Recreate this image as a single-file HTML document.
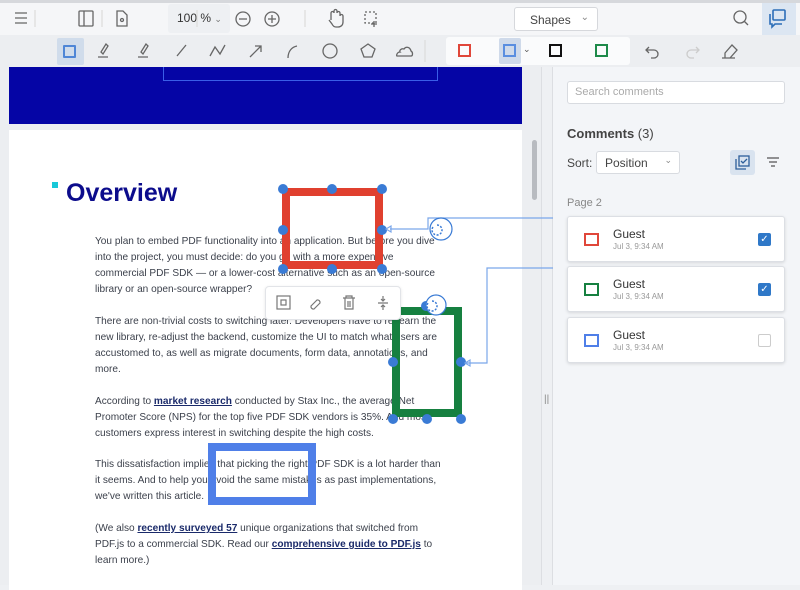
<!DOCTYPE html>
<html><head><meta charset="utf-8"><style>
*{box-sizing:border-box;margin:0;padding:0}
body{width:800px;height:585px;overflow:hidden;font-family:"Liberation Sans",sans-serif;background:#eef0f3;position:relative;color:#333}
.a{position:absolute}
.tb{left:0;width:800px;background:#f5f6f8}
svg{position:absolute;overflow:visible}
.p{font-size:10.1px;color:#3a3f4a;line-height:16px;left:95px;width:350px;white-space:nowrap}
.p b{color:#1a2a6a;text-decoration:underline;font-weight:bold}
.card{left:567px;width:218px;height:46px;background:#fff;border:1px solid #dcdfe4;border-radius:3px;box-shadow:0 1px 3px rgba(0,0,0,.12)}
.card .sq{position:absolute;left:16px;top:16px;width:15px;height:13px;border:2px solid}
.card .n{position:absolute;left:45px;top:10px;font-size:12px;color:#333}
.card .d{position:absolute;left:45px;top:25px;font-size:8px;color:#999}
.card .cb{position:absolute;left:190px;top:16px;width:13px;height:13px;border-radius:2px}
.h{width:10px;height:10px;border-radius:50%;background:#3a7bd5;position:absolute}
</style></head><body>
<div class="a" style="left:0;top:0;width:800px;height:3px;background:#d6d8dc"></div>
<div class="a tb" style="top:3px;height:32px"></div>
<div class="a tb" style="top:35px;height:32px;background:#eceef1"></div>
<div class="a" style="left:168px;top:4px;width:62px;height:29px;background:#eef0f3;border-radius:3px"></div>
<div class="a" style="left:177px;top:11px;font-size:12px;color:#333">100 % <span style="font-size:9px;color:#777">⌄</span></div>
<svg style="left:0;top:0" width="800" height="70" fill="none" stroke="#666" stroke-width="1.3">
<path d="M15 13h12M15 18h12M15 23h12"/>
<line x1="35" y1="10" x2="35" y2="27" stroke="#ddd"/>
<rect x="79" y="11" width="14" height="15" rx="1"/><line x1="84" y1="11" x2="84" y2="26"/>
<path d="M117 11h6l4 4v11h-10z"/><circle cx="122" cy="20" r="1.5"/>
<line x1="102" y1="10" x2="102" y2="27" stroke="#ddd"/>
<line x1="197" y1="10" x2="197" y2="27" stroke="#ddd"/>
<circle cx="243" cy="19" r="7"/><path d="M239 19h8"/>
<circle cx="272" cy="19" r="7"/><path d="M268 19h8M272 15v8"/>
<line x1="305" y1="10" x2="305" y2="27" stroke="#ddd"/>
<path d="M331 20v-7a1.5 1.5 0 013 0v-2a1.5 1.5 0 013 0v2a1.5 1.5 0 013 0v3a1.5 1.5 0 013 0v6c0 3-2 5-5 5h-2c-2 0-3-1-4-3l-3-4"/>
<rect x="365" y="12" width="11" height="11" stroke-dasharray="2 2"/><path d="M374 21v6M371 24h6"/>
<circle cx="740" cy="17" r="6"/><path d="M744 21l4 4"/>
<path d="M106 44l-5 8 2 2 5-8zM98 57h10" />
<path d="M146 44l-5 8 2 2 5-8zM138 57h10"/>
<path d="M177 56l9-11"/>
<path d="M210 56l5-9 5 7 5-9"/>
<path d="M250 57l11-11M255 46h6v6"/>
<path d="M288 58c0-7 4-11 9-12"/>
<circle cx="330" cy="51" r="7"/>
<path d="M368 44l7 5-3 8h-8l-3-8z"/>
<path d="M397 56h14c2 0 2-4 0-5-1-4-5-5-7-2-3-1-5 2-4 3-3 0-4 4-3 4z"/>
<line x1="425" y1="40" x2="425" y2="62" stroke="#ddd"/>
<path d="M649 47l-3 3 3 3M646 50h8a4 4 0 010 8h-3"/>
<path d="M696 47l3 3-3 3M699 50h-8a4 4 0 000 8h3" stroke="#ccc"/>
<path d="M725 53l7-8 5 5-7 8h-5zM722 58h13"/>
</svg>
<div class="a" style="left:514px;top:7px;width:84px;height:24px;background:#fff;border:1px solid #d6d8dc;border-radius:3px;font-size:12px;color:#444;padding:5px 0 0 15px">Shapes <span style="position:absolute;right:8px;top:4px;font-size:10px;color:#888">⌄</span></div>
<div class="a" style="left:762px;top:3px;width:34px;height:32px;background:#dce6f2"></div>
<svg style="left:766px;top:7px" width="26" height="24" fill="none" stroke="#2d6fb8" stroke-width="1.6"><rect x="7" y="3" width="12" height="10" rx="1"/><path d="M4 7v10h2v3l3-3h7"/></svg>
<div class="a" style="left:57px;top:38px;width:27px;height:27px;background:#d0dceb;border-radius:2px"></div>
<div class="a" style="left:63px;top:45px;width:13px;height:13px;border:2px solid #4f86d6;border-radius:1px"></div>
<div class="a" style="left:446px;top:37px;width:184px;height:28px;background:#fafbfc;border-radius:3px"></div>
<div class="a" style="left:458px;top:44px;width:13px;height:13px;border:2px solid #e0473a"></div>
<div class="a" style="left:499px;top:38px;width:22px;height:26px;background:#cfdaea;border-radius:2px"></div>
<div class="a" style="left:503px;top:44px;width:13px;height:13px;border:2px solid #5a8ee0"></div>
<div class="a" style="left:523px;top:44px;font-size:9px;color:#555">⌄</div>
<div class="a" style="left:549px;top:44px;width:13px;height:13px;border:2px solid #111"></div>
<div class="a" style="left:595px;top:44px;width:13px;height:13px;border:2px solid #1e8a4a"></div>
<div class="a" style="left:0;top:67px;width:541px;height:518px;background:#eceef1"></div>
<div class="a" style="left:9px;top:67px;width:513px;height:57px;background:#0505a5"></div>
<div class="a" style="left:163px;top:67px;width:275px;height:14px;border:1px solid #3a5ee8;border-top:none"></div>
<div class="a" style="left:9px;top:130px;width:513px;height:460px;background:#fff"></div>
<div class="a" style="left:532px;top:140px;width:5px;height:60px;background:#b8bbc0;border-radius:3px"></div>
<div class="a" style="left:541px;top:67px;width:1px;height:518px;background:#dcdee2"></div>
<div class="a" style="left:544px;top:394px;font-size:10px;color:#888">||</div>
<div class="a" style="left:552px;top:67px;width:1px;height:518px;background:#dcdee2"></div>
<div class="a" style="left:52px;top:182px;width:6px;height:6px;background:#18c8d8"></div>
<div class="a" style="left:66px;top:179px;font-size:25px;font-weight:bold;color:#0c0c8c">Overview</div>
<div class="a p" style="top:234px">You plan to embed PDF functionality into an application. But before you dive<br>into the project, you must decide: do you go with a more expensive<br>commercial PDF SDK — or a lower-cost alternative such as an open-source<br>library or an open-source wrapper?</div>
<div class="a p" style="top:314px">There are non-trivial costs to switching later. Developers have to re-learn the<br>new library, re-adjust the backend, customize the UI to match what users are<br>accustomed to, as well as migrate documents, form data, annotations, and<br>more.</div>
<div class="a p" style="top:394px">According to <b>market research</b> conducted by Stax Inc., the average Net<br>Promoter Score (NPS) for the top five PDF SDK vendors is 35%. And most<br>customers express interest in switching despite the high costs.</div>
<div class="a p" style="top:457px">This dissatisfaction implies that picking the right PDF SDK is a lot harder than<br>it seems. And to help you avoid the same mistakes as past implementations,<br>we've written this article.</div>
<div class="a p" style="top:521px">(We also <b>recently surveyed 57</b> unique organizations that switched from<br>PDF.js to a commercial SDK. Read our <b>comprehensive guide to PDF.js</b> to<br>learn more.)</div>
<div class="a" style="left:282px;top:188px;width:101px;height:81px;border:8px solid #e0402f"></div>
<div class="a" style="left:392px;top:307px;width:70px;height:110px;border:8px solid #168040"></div>
<div class="a" style="left:208px;top:443px;width:108px;height:62px;border:8px solid #4f7fe8"></div>
<div class="h" style="left:278px;top:184px"></div><div class="h" style="left:327px;top:184px"></div><div class="h" style="left:377px;top:184px"></div>
<div class="h" style="left:278px;top:225px"></div><div class="h" style="left:377px;top:225px"></div>
<div class="h" style="left:278px;top:264px"></div><div class="h" style="left:327px;top:264px"></div><div class="h" style="left:377px;top:264px"></div>
<div class="h" style="left:421px;top:301px"></div><div class="h" style="left:388px;top:357px"></div><div class="h" style="left:456px;top:357px"></div>
<div class="h" style="left:388px;top:414px"></div><div class="h" style="left:422px;top:414px"></div><div class="h" style="left:456px;top:414px"></div>
<svg style="left:0;top:0" width="800" height="585" fill="none" stroke="#7aa6ea" stroke-width="1.2">
<path d="M567 218H428v11h-38M386 229l5-3v6z"/>
<path d="M567 268H487v95h-22M465 363l5-3v6z"/>
<circle cx="441" cy="229" r="11" fill="#fff" stroke="#3a7bd5"/>
<circle cx="436" cy="305" r="10" fill="#fff" stroke="#3a7bd5"/>
<path d="M437 225a5 5 0 11-4 2" stroke="#3a7bd5" stroke-width="1.5" stroke-dasharray="2 1.5"/>
<path d="M432 301a5 5 0 11-4 2" stroke="#3a7bd5" stroke-width="1.5" stroke-dasharray="2 1.5"/>
</svg>
<div class="a" style="left:265px;top:286px;width:136px;height:34px;background:#fff;border:1px solid #e2e4e8;border-radius:4px;box-shadow:0 1px 3px rgba(0,0,0,.1)"></div>
<svg style="left:265px;top:286px" width="136" height="34" fill="none" stroke="#777" stroke-width="1.2">
<rect x="12" y="10" width="13" height="13"/><rect x="16" y="14" width="5" height="5"/>
<path d="M46 20l6-6a2.5 2.5 0 013 3l-6 6a2.5 2.5 0 01-3-3zM48 18l4-4"/>
<path d="M78 12h12M81 12v-2h6v2M80 12v11h8V12M83 15v6M85 15v6"/>
<path d="M118 10v5M118 19v5M113 17h10M116 13l2 2 2-2M116 21l2-2 2 2"/>
</svg>
<div class="a" style="left:553px;top:67px;width:247px;height:518px;background:#f3f5f8"></div>
<div class="a" style="left:567px;top:81px;width:218px;height:23px;background:#fff;border:1px solid #d8dbe0;border-radius:3px;font-size:11px;color:#aaa;padding:4px 0 0 7px">Search comments</div>
<div class="a" style="left:567px;top:126px;font-size:13px;font-weight:bold;color:#444">Comments <span style="font-weight:normal">(3)</span></div>
<div class="a" style="left:567px;top:156px;font-size:12px;color:#444">Sort:</div>
<div class="a" style="left:596px;top:151px;width:84px;height:23px;background:#fff;border:1px solid #d8dbe0;border-radius:3px;font-size:12px;color:#444;padding:4px 0 0 8px">Position<span style="position:absolute;right:7px;top:3px;font-size:9px;color:#888">⌄</span></div>
<div class="a" style="left:730px;top:150px;width:25px;height:25px;background:#d9e3ef;border-radius:3px"></div>
<svg style="left:730px;top:150px" width="60" height="25" fill="none" stroke="#2d5f9a" stroke-width="1.3"><rect x="9" y="6" width="10" height="10"/><path d="M6 9v10h10M11 11l2 2 4-4"/><path d="M37 8h12M39 12h8M41 16h4" stroke="#555"/></svg>
<div class="a" style="left:567px;top:197px;font-size:11px;color:#888">Page 2</div>
<div class="a card" style="top:216px"><div class="sq" style="border-color:#e0473a"></div><div class="n">Guest</div><div class="d">Jul 3, 9:34 AM</div><div class="cb" style="background:#2f78c8;color:#fff;font-size:10px;text-align:center;line-height:13px">✓</div></div>
<div class="a card" style="top:266px"><div class="sq" style="border-color:#168040"></div><div class="n">Guest</div><div class="d">Jul 3, 9:34 AM</div><div class="cb" style="background:#2f78c8;color:#fff;font-size:10px;text-align:center;line-height:13px">✓</div></div>
<div class="a card" style="top:317px"><div class="sq" style="border-color:#4f7fe8"></div><div class="n">Guest</div><div class="d">Jul 3, 9:34 AM</div><div class="cb" style="border:1px solid #ccc;background:#fff"></div></div>
</body></html>
